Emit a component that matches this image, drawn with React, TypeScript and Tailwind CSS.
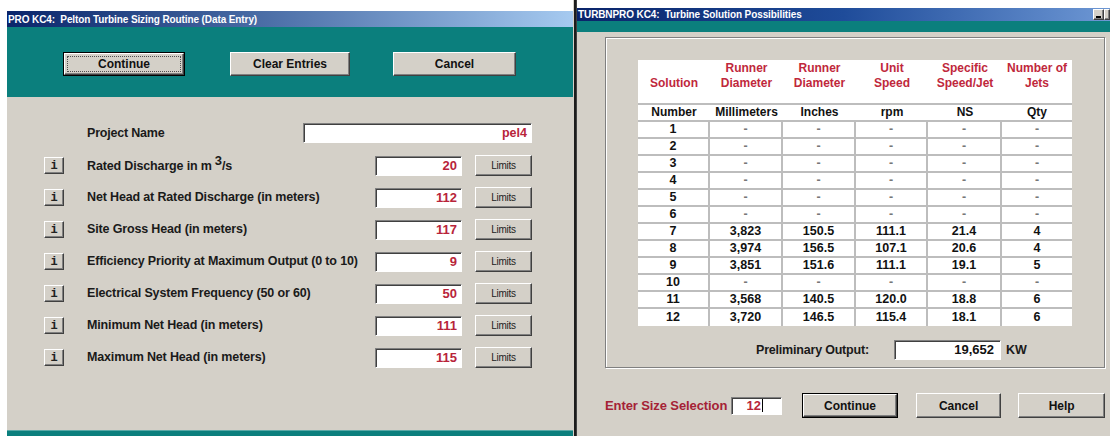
import React from "react";

const FONT = { fontFamily: '"Liberation Sans", Arial, sans-serif' };

function Raised({
  className = "",
  children,
}: {
  className?: string;
  children?: React.ReactNode;
}) {
  return (
    <div
      className={`flex items-center justify-center bg-[#d4d0c8] border border-t-white border-l-white border-r-[#404040] border-b-[#404040] shadow-[inset_-1px_-1px_0_#808080] ${className}`}
    >
      {children}
    </div>
  );
}

function DefaultButton({
  className = "",
  children,
  focus = false,
}: {
  className?: string;
  children?: React.ReactNode;
  focus?: boolean;
}) {
  return (
    <div className={`border border-black flex ${className}`}>
      <Raised className="flex-1">
        {focus ? (
          <div className="flex-1 self-stretch m-[2px] border border-dotted border-[#505050] flex items-center justify-center">
            {children}
          </div>
        ) : (
          children
        )}
      </Raised>
    </div>
  );
}

function Sunken({
  className = "",
  children,
}: {
  className?: string;
  children?: React.ReactNode;
}) {
  return (
    <div
      className={`bg-white border border-t-[#808080] border-l-[#808080] border-r-white border-b-white shadow-[inset_1px_1px_0_#404040] flex items-center ${className}`}
    >
      {children}
    </div>
  );
}

const entryRows: { label: React.ReactNode; value: string }[] = [
  {
    label: (
      <>
        Rated Discharge in m
        <span className="relative -top-[5px] text-[13px] ml-[3px]">3</span>/s
      </>
    ),
    value: "20",
  },
  { label: "Net Head at Rated Discharge (in meters)", value: "112" },
  { label: "Site Gross Head (in meters)", value: "117" },
  { label: "Efficiency Priority at Maximum Output (0 to 10)", value: "9" },
  { label: "Electrical System Frequency (50 or 60)", value: "50" },
  { label: "Minimum Net Head (in meters)", value: "111" },
  { label: "Maximum Net Head (in meters)", value: "115" },
];

function EntryWindow() {
  return (
    <div className="w-[566px] mt-[11px] flex flex-col h-[425px]">
      <div className="h-[16px] bg-gradient-to-r from-[#0a246a] to-[#a6caf0] flex items-center pl-[1px]">
        <span className="text-white font-bold text-[10px] tracking-[-0.1px]">
          PRO KC4:&nbsp; Pelton Turbine Sizing Routine (Data Entry)
        </span>
      </div>
      <div className="h-[70px] bg-[#0b7f7d] flex items-start pt-[25px] pl-[56px]">
        <DefaultButton focus className="w-[122px] h-[24px]">
          <span className="font-bold text-[12px] text-[#111]">Continue</span>
        </DefaultButton>
        <Raised className="w-[120px] h-[24px] ml-[45px]">
          <span className="font-bold text-[12px] text-[#111]">Clear Entries</span>
        </Raised>
        <Raised className="w-[123px] h-[24px] ml-[43px]">
          <span className="font-bold text-[12px] text-[#111]">Cancel</span>
        </Raised>
      </div>
      <div className="flex-1 bg-[#d4d0c8] pt-[26px] flex flex-col">
        <div className="flex items-center h-[20px]">
          <span className="ml-[80px] w-[216px] font-bold text-[12.5px] text-[#1a1a1a] tracking-[-0.2px]">
            Project Name
          </span>
          <Sunken className="w-[229px] h-[20px] justify-end pr-[4px]">
            <span className="font-bold text-[12.5px] text-[#b8243a]">pel4</span>
          </Sunken>
        </div>
        <div className="flex flex-col gap-[11px] mt-[12px]">
          {entryRows.map((r, i) => (
            <div key={i} className="flex items-center h-[21px]">
              <Raised className="ml-[37px] w-[20px] h-[17px]">
                <span className="text-[12px] font-bold text-[#222]" style={{ fontFamily: '"Liberation Mono", monospace' }}>
                  i
                </span>
              </Raised>
              <span className="ml-[23px] w-[288px] font-bold text-[12.5px] text-[#1a1a1a] tracking-[-0.15px] whitespace-nowrap">
                {r.label}
              </span>
              <Sunken className="w-[87px] h-[20px] justify-end pr-[4px]">
                <span className="font-bold text-[13px] text-[#b8243a]">{r.value}</span>
              </Sunken>
              <Raised className="ml-[13px] w-[57px] h-[21px]">
                <span className="text-[10px] text-[#222] tracking-[-0.3px]">Limits</span>
              </Raised>
            </div>
          ))}
        </div>
      </div>
      <div className="h-[6px] bg-[#0b7f7d] border-t border-[#5aa9a7]" />
    </div>
  );
}

const headers: [string, string][] = [
  ["", "Solution"],
  ["Runner", "Diameter"],
  ["Runner", "Diameter"],
  ["Unit", "Speed"],
  ["Specific", "Speed/Jet"],
  ["Number of", "Jets"],
];
const units = ["Number", "Millimeters", "Inches", "rpm", "NS", "Qty"];

const D = "-";
const solutions: string[][] = [
  ["1", D, D, D, D, D],
  ["2", D, D, D, D, D],
  ["3", D, D, D, D, D],
  ["4", D, D, D, D, D],
  ["5", D, D, D, D, D],
  ["6", D, D, D, D, D],
  ["7", "3,823", "150.5", "111.1", "21.4", "4"],
  ["8", "3,974", "156.5", "107.1", "20.6", "4"],
  ["9", "3,851", "151.6", "111.1", "19.1", "5"],
  ["10", D, D, D, D, D],
  ["11", "3,568", "140.5", "120.0", "18.8", "6"],
  ["12", "3,720", "146.5", "115.4", "18.1", "6"],
];

const gridCols = "grid grid-cols-[72px_73px_73px_72px_74px_70px]";

function SolutionTable() {
  return (
    <div className="w-[434px] bg-white">
      <div className={`${gridCols} h-[43px] pt-[1px]`}>
        {headers.map((h, i) => (
          <div key={i} className="flex flex-col items-center text-[12px] font-bold text-[#c0283c] leading-[15px]">
            <span className="h-[15px]">{h[0]}</span>
            <span>{h[1]}</span>
          </div>
        ))}
      </div>
      <div className="h-[2px] bg-[#bdbdbd]" />
      <div className={`${gridCols} h-[15px] border-b-2 border-[#bdbdbd] box-content`}>
        {units.map((u, i) => (
          <div key={i} className="text-center text-[12px] font-bold text-[#111] leading-[14px]">
            {u}
          </div>
        ))}
      </div>
      {solutions.map((row, r) => (
        <div key={r} className={`${gridCols} h-[17px] border-b-2 border-[#bdbdbd] last:border-b-0`}>
          {row.map((c, i) => (
            <div
              key={i}
              className={`flex items-center justify-center text-[12.5px] font-bold leading-none ${
                i < 5 ? "border-r-2 border-[#bdbdbd]" : ""
              } ${c === D ? "text-[#777]" : "text-[#111]"}`}
            >
              {c}
            </div>
          ))}
        </div>
      ))}
    </div>
  );
}

function SolutionWindow() {
  return (
    <div className="w-[533px] h-[436px] flex flex-col">
      <div className="h-[8px] bg-white" />
      <div className="h-[13px] bg-gradient-to-r from-[#0a246a] via-[#1f4c9a] to-[#6d97d4] flex items-center pl-[1px] relative">
        <span className="text-white font-bold text-[10px] tracking-[-0.1px]">
          TURBNPRO KC4:&nbsp; Turbine Solution Possibilities
        </span>
        <div className="absolute right-0 top-[1px] flex">
          <Raised className="w-[11px] h-[11px] items-end pb-[1px]">
            <div className="w-[5px] h-[2px] bg-black" />
          </Raised>
          <Raised className="w-[6px] h-[11px]" />
        </div>
      </div>
      <div className="h-[11px] bg-[#0b7f7d]" />
      <div className="flex-1 bg-[#d4d0c8] pl-[28px] pr-[5px] pt-[5px] flex flex-col">
        <div className="h-[331px] border border-[#808080] shadow-[1px_1px_0_white,inset_1px_1px_0_white] pl-[32px] pt-[22px] flex flex-col">
          <SolutionTable />
          <div className="flex items-center mt-[14px] h-[20px]">
            <span className="ml-[118px] w-[138px] font-bold text-[12.5px] text-[#1a1a1a] tracking-[-0.2px]">
              Preliminary Output:
            </span>
            <Sunken className="w-[107px] h-[20px] justify-end pr-[6px] border-[#606060]">
              <span className="font-bold text-[13px] text-[#111]">19,652</span>
            </Sunken>
            <span className="ml-[5px] font-bold text-[12.5px] text-[#1a1a1a]">KW</span>
          </div>
        </div>
        <div className="flex items-center mt-[25px] h-[25px]">
          <span className="w-[127px] font-bold text-[13px] text-[#a52236] tracking-[-0.1px]">
            Enter Size Selection
          </span>
          <Sunken className="w-[51px] h-[18px] pl-[14px]">
            <span className="font-bold text-[13px] text-[#b8243a]">12</span>
            <span className="w-[1px] h-[13px] bg-black ml-[1px]" />
          </Sunken>
          <DefaultButton className="ml-[20px] w-[96px] h-[25px]">
            <span className="font-bold text-[12px] text-[#111]">Continue</span>
          </DefaultButton>
          <Raised className="ml-[18px] w-[86px] h-[25px]">
            <span className="font-bold text-[12px] text-[#111]">Cancel</span>
          </Raised>
          <Raised className="ml-[17px] w-[87px] h-[25px]">
            <span className="font-bold text-[12px] text-[#111]">Help</span>
          </Raised>
        </div>
      </div>
    </div>
  );
}

export default function App() {
  return (
    <div className="w-[1110px] h-[436px] bg-white flex overflow-hidden" style={FONT}>
      <div className="w-[7px]" />
      <EntryWindow />
      <div className="w-[4px] h-[436px] flex">
        <div className="w-[1px] bg-[#d4d0c8]" />
        <div className="w-[2px] bg-[#1c1c1c]" />
        <div className="w-[1px] bg-[#404040]" />
      </div>
      <SolutionWindow />
    </div>
  );
}
